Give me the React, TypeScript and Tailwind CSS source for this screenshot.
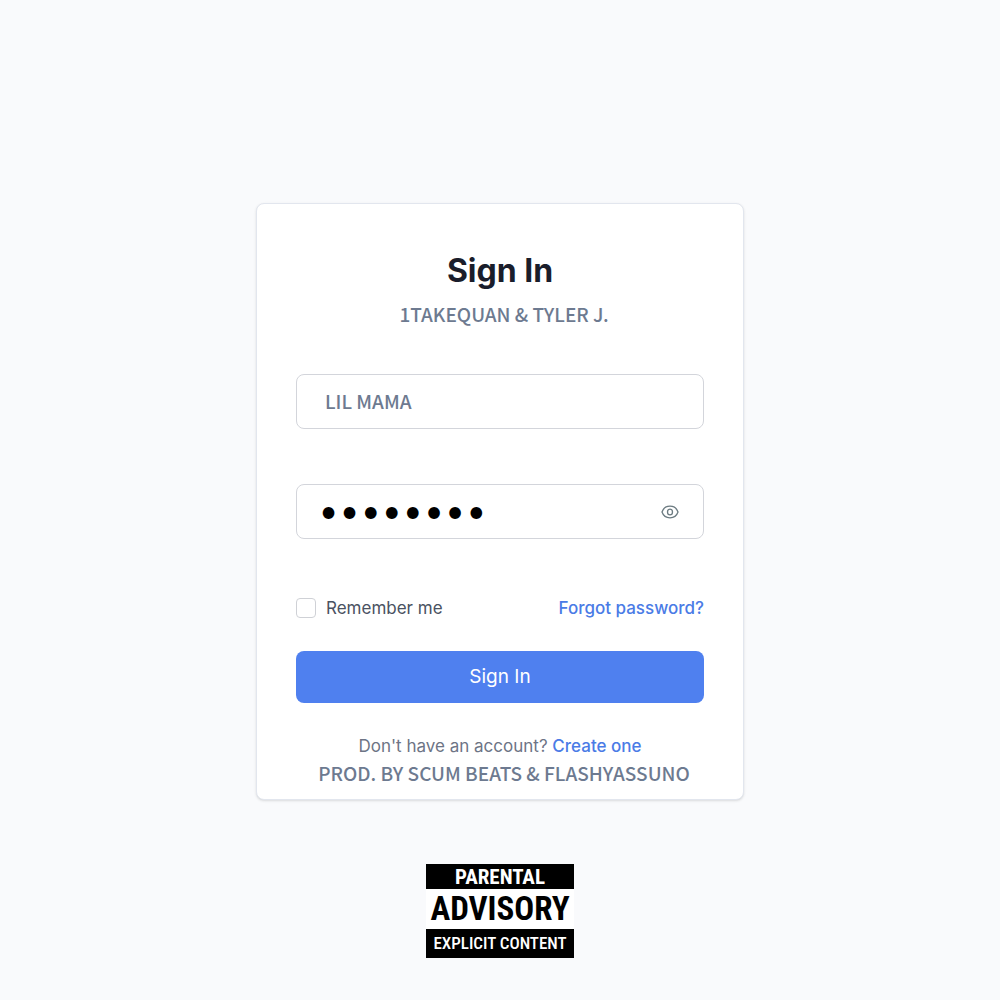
import { useState } from "react";

const caps = "font-['Noto_Sans_CJK_SC',sans-serif] font-medium text-[19px] text-[#6d7a90]";

function EyeIcon() {
  return (
    <svg viewBox="0 0 18 14" className="h-3.5 w-[18px]" fill="none" stroke="currentColor" strokeWidth="1.3" aria-hidden="true">
      <path d="M1 7C2.3 3.300 5.400 1.200 9 1.200S15.700 3.300 17 7C15.700 10.700 12.600 12.800 9 12.800S2.300 10.700 1 7Z" />
      <ellipse cx="9" cy="7" rx="2.500" ry="2.900" />
    </svg>
  );
}

function AdvisoryLabel() {
  return (
    <div className="mt-16 flex w-[148px] flex-col whitespace-nowrap bg-white text-center font-['Roboto_Condensed','Liberation_Sans_Narrow','Liberation_Sans',sans-serif] font-bold">
      <div className="h-[25px] bg-black text-[21px] leading-[26px] text-white">PARENTAL</div>
      <div className="h-10 text-[33px] leading-10 text-black">ADVISORY</div>
      <div className="h-[29px] bg-black text-[17px] leading-[29px] font-medium text-white">EXPLICIT CONTENT</div>
    </div>
  );
}

export default function App() {
  const [visible, setVisible] = useState(false);
  const [remember, setRemember] = useState(false);
  return (
    <main className="flex min-h-screen flex-col items-center bg-[#f9fafc] px-4 pt-[203px] pb-10 font-['Inter',sans-serif]">
      <form
        onSubmit={(e) => e.preventDefault()}
        className="flex w-full max-w-[488px] flex-col rounded-lg border border-[#e2e6ee] bg-white px-[39px] pt-11 pb-[13px] shadow-sm"
      >
        <h1 className="text-center text-[32px] leading-[46px] font-bold text-[#1a1d2b]">Sign In</h1>
        <p className={`mt-1.5 pl-2 text-center leading-7 ${caps}`}>1TAKEQUAN &amp; TYLER J.</p>

        <input
          type="text"
          aria-label="Username"
          defaultValue="LIL MAMA"
          className={`mt-[46px] h-[55px] w-full rounded-lg border border-[#d3d5db] bg-white px-7 pb-0.5 outline-none ${caps}`}
        />

        <div className="mt-[55px] flex h-[55px] items-center rounded-lg border border-[#d3d5db] bg-white pr-6 pl-[21px]">
          <input
            type={visible ? "text" : "password"}
            aria-label="Password"
            defaultValue="lilmama1"
            className="h-full min-w-0 flex-1 bg-transparent pt-1.5 font-['DejaVu_Sans',sans-serif] text-[33px] font-bold text-black outline-none"
          />
          <button type="button" aria-label="Show password" onClick={() => setVisible(!visible)} className="text-[#6b7a80]">
            <EyeIcon />
          </button>
        </div>

        <div className="mt-[55px] flex items-center justify-between text-[17px] leading-7">
          <label className="flex items-center gap-2.5 text-[#4a5262]">
            <input
              type="checkbox"
              checked={remember}
              onChange={(e) => setRemember(e.target.checked)}
              className="size-5 appearance-none rounded border border-[#cfd1d6] bg-white checked:bg-[#4f80ef]"
            />
            Remember me
          </label>
          <a href="#forgot" className="font-medium text-[#4a7be6]">Forgot password?</a>
        </div>

        <button type="submit" className="mt-[29px] h-[52px] rounded-lg bg-[#4f80ef] text-[19px] text-white">
          Sign In
        </button>

        <p className="mt-[29px] text-center text-[17px] leading-7 text-[#6d7485]">
          Don't have an account? <a href="#create" className="font-medium text-[#4a7be6]">Create one</a>
        </p>
        <p className={`pl-2 text-center leading-[26px] ${caps}`}>PROD. BY SCUM BEATS &amp; FLASHYASSUNO</p>
      </form>
      <AdvisoryLabel />
    </main>
  );
}
